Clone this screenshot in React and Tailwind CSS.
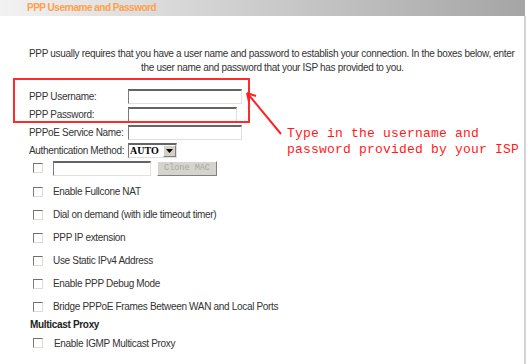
import React from "react";

function Check() {
  return (
    <div className="w-[10px] h-[10px] shrink-0 bg-white border-t border-l border-t-[#6e6e6e] border-l-[#7c7c7c] border-r border-b border-r-[#dedbd2] border-b-[#dedbd2]" />
  );
}

function TextInput({ w }) {
  return (
    <div
      className="h-[15px] bg-white border-t-2 border-l border-t-[#646464] border-l-[#7a7a7a] border-r border-b border-r-[#e2e0d8] border-b-[#e2e0d8]"
      style={{ width: w }}
    />
  );
}

function CheckRow({ label, h = "h-[23px]", textMl = "ml-[10px]" }) {
  return (
    <div className={`flex items-center pl-[33px] ${h}`}>
      <Check />
      <span className={`${textMl} whitespace-nowrap`}>{label}</span>
    </div>
  );
}

export default function App() {
  return (
    <div className="relative w-[528px] h-[364px] bg-white overflow-hidden font-['Liberation_Sans',Arial,sans-serif] text-[10px] tracking-[-0.32px] text-[#333]">
      <div className="h-[16px] w-[525px] bg-[linear-gradient(to_right,#f2f2f2,#a5a5a5)] pl-[27px] text-[10px] leading-[16px] font-bold tracking-[-0.5px] text-[#ffa04a]">
        PPP Username and Password
      </div>
      <div className="w-[526px] h-[348px] border-r-2 border-r-[#d4d4d4]">
        <div className="pt-[31px] leading-[14px]">
          <div className="pl-[29px] whitespace-nowrap">
            PPP usually requires that you have a user name and password to establish your connection. In the boxes below, enter
          </div>
          <div className="pl-[141px] whitespace-nowrap">
            the user name and password that your ISP has provided to you.
          </div>
        </div>

        <div className="mt-[12px] pl-[29px] grid grid-cols-[99px_auto] auto-rows-[18px] items-center">
          <span>PPP Username:</span>
          <TextInput w={114} />
          <span>PPP Password:</span>
          <TextInput w={109} />
          <span>PPPoE Service Name:</span>
          <TextInput w={114} />
          <span className="whitespace-nowrap">Authentication Method:</span>
          <div className="w-[49px] h-[15px] flex bg-white border-t-2 border-l border-t-[#646464] border-l-[#7a7a7a] border-r border-b border-r-[#e2e0d8] border-b-[#e2e0d8]">
            <span className="flex-1 pl-[1px] font-['Liberation_Serif',serif] font-bold text-[10px] leading-[12px] tracking-[0px] text-black">
              AUTO
            </span>
            <div className="w-[13px] h-[12px] bg-[#d4d0c8] border-t border-l border-t-white border-l-white border-r border-b border-r-[#808080] border-b-[#808080] flex items-center justify-center">
              <svg width="7" height="4" viewBox="0 0 7 4">
                <path d="M0 0 H7 L3.5 4 Z" fill="#000" />
              </svg>
            </div>
          </div>
        </div>

        <div className="flex items-center h-[18px] pl-[33px]">
          <Check />
          <div className="ml-[10px]">
            <TextInput w={98} />
          </div>
          <div className="ml-[6px] w-[60px] h-[15px] bg-[#d6d3cc] border border-t-white border-l-white border-r-[#808080] border-b-[#808080] flex items-center justify-center font-['Liberation_Mono',monospace] text-[8.5px] tracking-[0px] text-[#a8a8a8]">
            Clone MAC
          </div>
        </div>

        <div className="mt-[3px]">
          <CheckRow label="Enable Fullcone NAT" />
          <CheckRow label="Dial on demand (with idle timeout timer)" />
          <CheckRow label="PPP IP extension" />
          <CheckRow label="Use Static IPv4 Address" />
          <CheckRow label="Enable PPP Debug Mode" />
          <CheckRow label="Bridge PPPoE Frames Between WAN and Local Ports" />
          <div className="h-[13px] pl-[30px] leading-[13px] font-bold text-[#222]">Multicast Proxy</div>
          <CheckRow label="Enable IGMP Multicast Proxy" h="h-[24px]" textMl="ml-[11px]" />
        </div>
      </div>

      {/* annotation overlay */}
      <div className="absolute left-[13px] top-[78px] w-[237px] h-[45px] border-2 border-[#ff2a2a]" />
      <svg className="absolute left-0 top-0" width="528" height="364" viewBox="0 0 528 364">
        <line x1="281" y1="134" x2="248" y2="94" stroke="#ff2020" strokeWidth="2" />
        <path d="M247 93 L256 96 M247 93 L249 102" stroke="#ff2020" strokeWidth="2" fill="none" />
      </svg>
      <div className="absolute left-[287px] top-[126px] font-['Liberation_Mono',monospace] text-[13px] leading-[16px] tracking-[0.2px] text-[#ff1a1a] whitespace-nowrap">
        <div>Type in the username and</div>
        <div>password provided by your ISP</div>
      </div>
    </div>
  );
}
